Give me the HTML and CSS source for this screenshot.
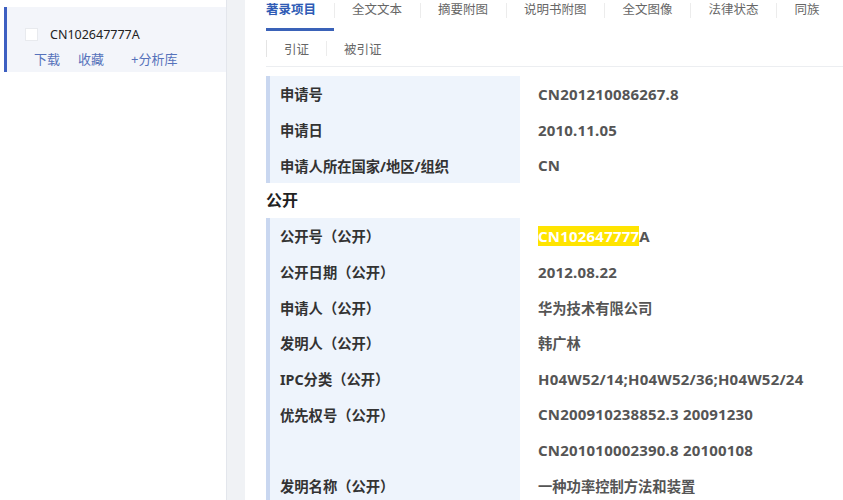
FILE: index.html
```html
<!DOCTYPE html>
<html lang="zh-CN">
<head>
<meta charset="utf-8">
<title>CN102647777A</title>
<link rel="stylesheet" href="styles.css">
</head>
<body>
<aside class="sidebar">
  <div class="item">
    <div class="item-head">
      <span class="checkbox"></span>
      <span class="pn">CN102647777A</span>
    </div>
    <div class="item-links">
      <a class="lnk">下载</a>
      <a class="lnk">收藏</a>
      <a class="lnk lnk-wide">+分析库</a>
    </div>
  </div>
</aside>
<main class="main">
  <nav class="tabs">
    <span class="tab active">著录项目</span><span class="sep"></span>
    <span class="tab">全文文本</span><span class="sep"></span>
    <span class="tab">摘要附图</span><span class="sep"></span>
    <span class="tab">说明书附图</span><span class="sep"></span>
    <span class="tab">全文图像</span><span class="sep"></span>
    <span class="tab">法律状态</span><span class="sep"></span>
    <span class="tab">同族</span>
  </nav>
  <div class="subtabs-wrap">
    <div class="subtabs">
      <span class="subtab">引证</span><span class="sep sub-sep"></span>
      <span class="subtab">被引证</span>
    </div>
  </div>
  <section class="group">
    <div class="row"><div class="label">申请号</div><div class="value">CN201210086267.8</div></div>
    <div class="row"><div class="label">申请日</div><div class="value">2010.11.05</div></div>
    <div class="row"><div class="label">申请人所在国家/地区/组织</div><div class="value">CN</div></div>
  </section>
  <h3 class="heading">公开</h3>
  <section class="group">
    <div class="row"><div class="label">公开号（公开）</div><div class="value"><span class="hl">CN102647777</span>A</div></div>
    <div class="row"><div class="label">公开日期（公开）</div><div class="value">2012.08.22</div></div>
    <div class="row"><div class="label">申请人（公开）</div><div class="value cjk">华为技术有限公司</div></div>
    <div class="row"><div class="label">发明人（公开）</div><div class="value cjk">韩广林</div></div>
    <div class="row"><div class="label">IPC分类（公开）</div><div class="value">H04W52/14;H04W52/36;H04W52/24</div></div>
    <div class="row"><div class="label">优先权号（公开）</div><div class="value">CN200910238852.3 20091230</div></div>
    <div class="row"><div class="label"></div><div class="value">CN201010002390.8 20100108</div></div>
    <div class="row"><div class="label">发明名称（公开）</div><div class="value cjk">一种功率控制方法和装置</div></div>
  </section>
</main>
</body>
</html>
```

FILE: styles.css
```css
html, body {
  margin: 0;
  padding: 0;
}
body {
  display: flex;
  height: 100vh;
  overflow: hidden;
  background: #f0f2f5;
  font-family: "Noto Sans", "Noto Sans CJK SC", sans-serif;
  color: #333;
}
.sidebar {
  width: 227px;
  box-sizing: border-box;
  flex-shrink: 0;
  background: #fff;
  border-right: 1px solid #e3e6ec;
  padding: 7px 0 0 4px;
}
.item {
  height: 65px;
  box-sizing: border-box;
  background: #f3f5fa;
  border-left: 3px solid #3d5fc1;
  padding-top: 17px;
}
.item-head {
  display: flex;
  align-items: center;
  height: 20px;
  padding-left: 18px;
}
.checkbox {
  width: 11px;
  height: 11px;
  background: #fff;
  border: 1px solid #e8eaee;
  margin-right: 12px;
}
.pn {
  font-size: 12.5px;
  color: #222;
}
.item-links {
  display: flex;
  align-items: center;
  height: 20px;
  margin-top: 4px;
  padding-left: 27px;
  gap: 18px;
}
.lnk {
  font-size: 13px;
  color: #5672bb;
}
.lnk-wide {
  margin-left: 9px;
}
.main {
  flex: 1;
  margin-left: 18px;
  background: #fff;
  padding-left: 21px;
  overflow: hidden;
}
.tabs {
  display: flex;
  align-items: flex-start;
  height: 31px;
}
.tab {
  font-size: 12.5px;
  line-height: 20px;
  color: #666;
  padding: 0 17.5px 8px;
  border-bottom: 3px solid transparent;
  white-space: nowrap;
}
.tab:first-child {
  padding-left: 0;
}
.tab.active {
  color: #2f5bb5;
  font-weight: bold;
  border-bottom-color: #3a62b8;
}
.sep {
  width: 1px;
  height: 15px;
  margin-top: 3px;
  background: #ececec;
}
.subtabs-wrap {
  margin-top: 9px;
  padding-bottom: 9px;
  border-bottom: 1px solid #eceef1;
}
.subtabs {
  display: flex;
  align-items: center;
  height: 17px;
  border-left: 1px solid #e4e4e4;
  padding-left: 17px;
}
.subtab {
  font-size: 12.5px;
  color: #666;
}
.sub-sep {
  margin: 0 17px;
  height: 15px;
}
.group {
  margin-top: 9px;
}
.heading + .group {
  margin-top: 0;
}
.row {
  display: flex;
  height: 35.7px;
}
.label {
  width: 254px;
  box-sizing: border-box;
  background: #eef4fc;
  border-left: 4px solid #c9d7f0;
  padding-left: 10px;
  font-size: 14.3px;
  font-weight: bold;
  color: #333;
  display: flex;
  align-items: center;
}
.value {
  padding-left: 18px;
  font-size: 15px;
  letter-spacing: 0.2px;
  font-weight: bold;
  color: #555;
  display: flex;
  align-items: center;
  white-space: nowrap;
}
.value.cjk {
  font-size: 14.3px;
  letter-spacing: 0;
}
.hl {
  background: #ffe400;
  color: #fff;
}
.heading {
  margin: 0;
  font-size: 16px;
  font-weight: bold;
  color: #222;
  line-height: 35px;
}
```
